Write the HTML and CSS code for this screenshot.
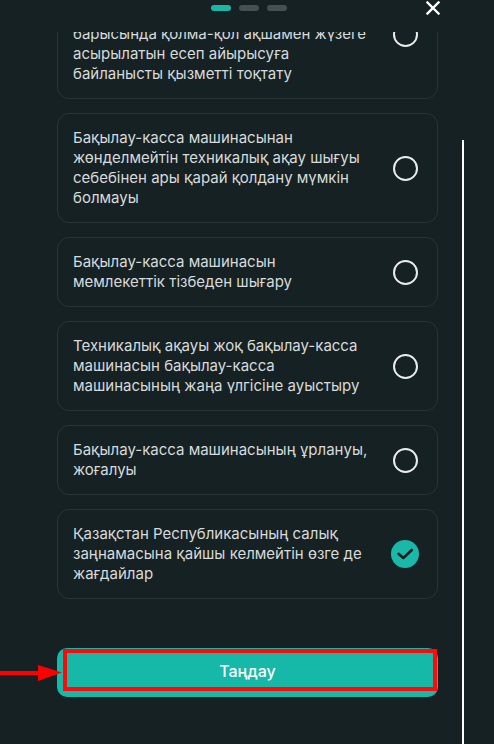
FILE: index.html
```html
<!DOCTYPE html>
<html lang="kk">
<head>
<meta charset="utf-8">
<title>Таңдау</title>
<link rel="stylesheet" href="styles.css">
</head>
<body>
<div class="sheet">
  <div class="main">
    <div class="header">
      <span></span>
      <div class="dots">
        <span class="dot active"></span>
        <span class="dot"></span>
        <span class="dot"></span>
      </div>
      <button class="close" aria-label="Жабу">
        <svg width="14" height="14" viewBox="0 0 14 14"><path d="M1.5 1.5 L12.5 12.5 M12.5 1.5 L1.5 12.5" stroke="#fff" stroke-width="2.4" stroke-linecap="square"/></svg>
      </button>
    </div>
    <div class="list">
      <div class="card">
        <p class="label">Тауарларды өткізу, жұмыстарды орындау, қызметтер көрсету<br>барысында қолма-қол ақшамен жүзеге асырылатын есеп айырысуға байланысты қызметті тоқтату</p>
        <span class="slot"><span class="radio"></span></span>
      </div>
      <div class="card">
        <p class="label">Бақылау-касса машинасынан жөнделмейтін техникалық ақау шығуы себебінен ары қарай қолдану мүмкін болмауы</p>
        <span class="slot"><span class="radio"></span></span>
      </div>
      <div class="card">
        <p class="label">Бақылау-касса машинасын мемлекеттік тізбеден шығару</p>
        <span class="slot"><span class="radio"></span></span>
      </div>
      <div class="card">
        <p class="label">Техникалық ақауы жоқ бақылау-касса машинасын бақылау-касса машинасының жаңа үлгісіне ауыстыру</p>
        <span class="slot"><span class="radio"></span></span>
      </div>
      <div class="card">
        <p class="label">Бақылау-касса машинасының ұрлануы, жоғалуы</p>
        <span class="slot"><span class="radio"></span></span>
      </div>
      <div class="card">
        <p class="label">Қазақстан Республикасының салық заңнамасына қайшы келмейтін өзге де жағдайлар</p>
        <span class="slot">
          <span class="checked">
            <svg width="28" height="28" viewBox="0 0 28 28"><path d="M7.5 13.8 L12.3 18 L20.8 10" fill="none" stroke="#15201f" stroke-width="2.6" stroke-linecap="round" stroke-linejoin="round"/></svg>
          </span>
        </span>
      </div>
    </div>
    <div class="footer">
      <button class="submit">
        Таңдау
        <span class="mark"></span>
        <svg class="arrow" width="64" height="18" viewBox="0 0 64 18"><path d="M0 9 H42" stroke="#ff0000" stroke-width="4"/><path d="M38 1 L62 8.5 L38 17 Z" fill="#ff0000"/></svg>
      </button>
    </div>
  </div>
  <div class="rail"></div>
</div>
</body>
</html>
```

FILE: styles.css
```css
* { box-sizing: border-box; }
html, body { margin: 0; padding: 0; }
body {
  background: #162123;
  font-family: Inter, "Noto Sans", "DejaVu Sans", sans-serif;
  color: #d7dbdc;
  width: 494px;
  height: 744px;
  overflow: hidden;
}
.sheet {
  display: flex;
  height: 744px;
}
.main {
  width: 381px;
  margin-left: 57px;
  display: flex;
  flex-direction: column;
}
.rail {
  width: 2px;
  margin-left: 24px;
  margin-top: 140px;
  background: #ffffff;
}
.header {
  height: 32px;
  flex-shrink: 0;
  display: grid;
  grid-template-columns: 1fr auto 1fr;
  align-items: start;
}
.dots {
  display: flex;
  gap: 8px;
  padding-top: 5px;
  padding-left: 3px;
}
.dot {
  width: 20px;
  height: 6px;
  border-radius: 3px;
  background: #464f51;
}
.dot.active { background: #19b6a6; }
.close {
  justify-self: end;
  margin-right: -2px;
  margin-top: 1px;
  padding: 0;
  border: 0;
  background: none;
  width: 14px;
  height: 14px;
  display: block;
}
.close svg { display: block; }
.list {
  height: 567px;
  flex-shrink: 0;
  overflow: hidden;
  display: flex;
  flex-direction: column;
  justify-content: flex-end;
  gap: 14px;
}
.card {
  flex-shrink: 0;
  display: flex;
  align-items: center;
  gap: 14px;
  border: 1px solid #273538;
  border-radius: 12px;
  padding: 14px 18px 14px 15px;
}
.label {
  margin: 0;
  flex: 1;
  padding-right: 9px;
  font-size: 15px;
  line-height: 20px;
}
.slot {
  width: 28px;
  height: 28px;
  flex-shrink: 0;
  display: flex;
  align-items: center;
  justify-content: center;
}
.radio {
  width: 25px;
  height: 25px;
  border-radius: 50%;
  border: 2px solid #e9ecec;
}
.checked {
  width: 28px;
  height: 28px;
  border-radius: 50%;
  background: #19b8a8;
  display: block;
}
.checked svg { display: block; }
.footer {
  padding-top: 49px;
}
.submit {
  position: relative;
  display: flex;
  align-items: center;
  justify-content: center;
  width: 100%;
  height: 49px;
  border: 0;
  border-radius: 10px;
  background: #16b8a8;
  color: #ffffff;
  font-family: Inter, "Noto Sans", sans-serif;
  font-size: 16px;
  font-weight: 500;
  padding: 0 0 4px;
}
.mark {
  position: absolute;
  left: 6px;
  top: 1px;
  width: 374px;
  height: 42px;
  border: 4px solid #ff0a0a;
}
.arrow {
  position: absolute;
  left: -57px;
  top: 16px;
}
```
